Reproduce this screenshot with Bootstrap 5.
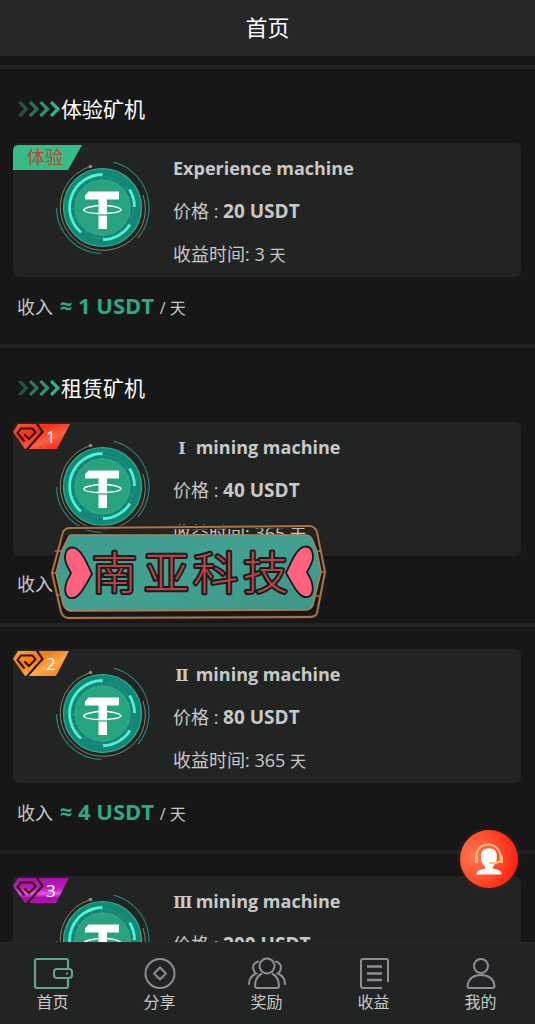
<!DOCTYPE html>
<html lang="zh-CN">
<head>
<meta charset="utf-8">
<meta name="viewport" content="width=device-width, initial-scale=1">
<title>首页</title>
<link href="https://cdn.jsdelivr.net/npm/bootstrap@5.3.0/dist/css/bootstrap.min.css" rel="stylesheet">
<style>
  body { background: #171717; color: #c8c8c8; font-family: "Open Sans", "Noto Sans CJK SC", sans-serif; font-size: 18px; }
  .app-head { background: #272727; height: 56px; }
  .app-head h1 { font-size: 22px; line-height: 54px; color: #fff; font-weight: 400; }
  .app-main { min-height: 0; scrollbar-width: none; padding-top: 9px; }
  .app-main::-webkit-scrollbar { display: none; }
  .machine { border-top: 4px solid #222322; }
  .machine-title { font-size: 21px; line-height: 32px; color: #fff; font-weight: 400; padding: 24px 18px 18px; }
  .machine-body { padding: 0 14px 0 13px; }
  .machine-plain { padding-top: 22px; }
  .machine-card { --bs-card-bg: #222423; --bs-card-border-width: 0; --bs-card-border-radius: 6px; --bs-card-color: #c8c8c8; height: 134px; }
  .coin-col { width: 160px; padding: 15px 0 0 40px; }
  .machine-info { padding-top: 4px; line-height: 43px; }
  .machine-info > * { height: 43px; }
  .machine-info h3 { font-size: 18px; line-height: 43px; font-weight: 700; }
  .machine-info strong { font-size: 19px; }
  .numeral { display: inline-block; width: 18px; text-align: center; font: 700 16px "DejaVu Serif", serif; }
  .unit { font-size: 16px; }
  .income { height: 67px; line-height: 28px; padding: 14px 4px 0; }
  .income strong { color: #2fa886; font-size: 22px; margin: 0 1px 0 2px; }
  .level { position: absolute; left: 0; top: 2px; line-height: 0; }
  .stamp { position: absolute; left: 37px; top: 101px; z-index: 3; line-height: 0; }
  .app-nav { background: #222423; height: 82px; border-top: 1px solid #292b2a; }
  .app-nav .nav-link { color: #c8c8c8; font-size: 16px; line-height: 22px; padding: 12px 2px 0 0; }
  .app-nav svg { height: 36px; width: 40px; fill: none; stroke: #8d8d98; stroke-width: 2; }
  .app-nav .active svg { stroke: #62a68d; }
  .service { position: absolute; right: 17px; bottom: 136px; width: 58px; height: 58px; background: radial-gradient(circle at 25% 45%, #ff7650 0, #ff5030 42%, #fc1c10 85%); box-shadow: 0 0 5px #7c241488; }
</style>
</head>
<body>
<svg width="0" height="0" class="position-absolute" aria-hidden="true">
  <defs>
    <radialGradient id="rim"><stop offset=".65" stop-color="#138170"/><stop offset="1" stop-color="#118a77"/></radialGradient>
    <linearGradient id="red" x2="1" y2="1"><stop stop-color="#ff5b36"/><stop offset=".35" stop-color="#f03018"/><stop offset=".62" stop-color="#ff6040"/><stop offset="1" stop-color="#e81206"/></linearGradient>
    <linearGradient id="orange" x2="1" y2="1"><stop stop-color="#ffa53e"/><stop offset=".35" stop-color="#f37c0a"/><stop offset=".62" stop-color="#ffa94e"/><stop offset="1" stop-color="#f07400"/></linearGradient>
    <linearGradient id="purple" x2="0" y2="1"><stop stop-color="#ab0fae"/><stop offset=".4" stop-color="#b51fb6"/><stop offset=".62" stop-color="#e058df"/><stop offset=".8" stop-color="#a90aaa"/><stop offset="1" stop-color="#b514b8"/></linearGradient>
    <symbol id="coin" viewBox="0 0 100 100">
      <g fill="none">
        <path d="M60.500 4.200A47 47 0 0 1 85 80" stroke="#267f7b" stroke-width="1.200"/>
        <path d="M3.500 50A46 46 0 0 0 48.500 95.500" stroke="#267f7b" stroke-width="1.200"/>
        <path d="M37.500 8.500A42.500 42.500 0 0 0 9.500 63A43 43 0 0 0 89 68A45 45 0 0 0 90 37" stroke="#8d7d58" stroke-width="1"/>
      </g>
      <circle cx="37.500" cy="8.500" r="1.800" fill="#998b65"/>
      <circle cx="49.500" cy="49.500" r="39" fill="url(#rim)" stroke="#32ad91" stroke-width="1.200"/>
      <circle cx="49.500" cy="49.500" r="29.500" fill="none" stroke="#26988a" stroke-width="4"/>
      <circle cx="49.500" cy="49.500" r="29.500" fill="none" stroke="#158375" stroke-width="3" stroke-dasharray="8.200 1"/>
      <circle cx="49.500" cy="49.500" r="27.500" fill="#27a37e" stroke="#3cb08f" stroke-width=".8"/>
      <g fill="none" stroke="#4ff2d1" stroke-width="2.800">
        <path d="M49.500 16.500A33 33 0 0 0 28 74.500"/>
        <path d="M76.500 31.500A32.500 32.500 0 0 1 81.500 49"/>
        <path d="M77 66.500A32.500 32.500 0 0 1 50 81.500"/>
      </g>
      <path fill="#fff" d="M35.500 33.500h30.500v8h-12v29.500h-8.500v-29.500h-13.500v-4z"/>
      <path d="M45.500 47.500C22 50.500 29 55.500 49.500 55.500S76 50 54 47.500" fill="none" stroke="#fff" stroke-width="1.400"/>
      <path d="M45.500 57h8.500" stroke="#27a37e" stroke-width="1.200"/>
    </symbol>
    <symbol id="arrows" viewBox="0 0 42 16">
      <g fill="none" stroke="#35b08c" stroke-width="3.200">
        <path opacity=".4" d="M1 1L8 8L1 15"/><path opacity=".6" d="M11.500 1L18.500 8L11.500 15"/><path opacity=".8" d="M22 1L29 8L22 15"/><path d="M32.500 1L39.500 8L32.500 15"/>
      </g>
    </symbol>
    <symbol id="gem" viewBox="0 0 32 25">
      <path d="M23.500 -1L29.500 8L13.500 26" fill="none" stroke="#35100f" stroke-width="2.200"/>
      <path d="M11.500 17.500L4.500 9L8 4.500H19.500L22.500 8.500L16 15L11.500 10.500" fill="none" stroke="#35100f" stroke-width="2"/>
    </symbol>
    <path id="heart" d="M27 27C20 39 15 50 8 51C1 52-1 45 1 37C2 32 5 29 6 26C3 21 0 16 0 11C0 3 4-1 10 1C17 4 22 16 27 27z"/>
  </defs>
</svg>

<div class="d-flex flex-column vh-100 position-relative overflow-hidden">
  <header class="app-head flex-shrink-0 text-center"><h1 class="m-0">首页</h1></header>

  <main class="app-main flex-grow-1 overflow-auto">
    <section class="machine">
      <h2 class="machine-title m-0 d-flex align-items-center"><svg width="43" height="16" aria-hidden="true"><use href="#arrows"/></svg>体验矿机</h2>
      <div class="machine-body">
        <div class="card machine-card flex-row">
          <div class="level"><svg width="69" height="25"><path d="M0 25V6Q0 0 6 0H69L55 25z" fill="#35bd87"/><text x="14" y="19" font-size="18" fill="#c5442c">体验</text></svg></div>
          <div class="coin-col flex-shrink-0"><svg width="100" height="100" role="img" aria-label="USDT"><use href="#coin"/></svg></div>
          <div class="machine-info"><h3 class="m-0">Experience machine</h3><div>价格 : <strong>20 USDT</strong></div><div>收益时间: 3 <span class="unit">天</span></div></div>
        </div>
        <div class="income">收入 <strong>≈ 1 USDT</strong> <span class="unit">/ 天</span></div>
      </div>
    </section>

    <section class="machine">
      <h2 class="machine-title m-0 d-flex align-items-center"><svg width="43" height="16" aria-hidden="true"><use href="#arrows"/></svg>租赁矿机</h2>
      <div class="machine-body">
        <div class="card machine-card flex-row">
          <div class="level"><svg width="57" height="25"><path d="M0 8L5 0H57L44 25H12z" fill="url(#red)"/><use href="#gem" width="32" height="25"/><text x="33" y="19" font-size="17" fill="#fff">1</text></svg></div>
          <div class="coin-col flex-shrink-0"><svg width="100" height="100" role="img" aria-label="USDT"><use href="#coin"/></svg></div>
          <div class="machine-info"><h3 class="m-0"><span class="numeral">Ⅰ</span> mining machine</h3><div>价格 : <strong>40 USDT</strong></div><div>收益时间: 365 <span class="unit">天</span></div></div>
          <div class="stamp">
            <svg width="278" height="98" viewBox="0 0 278 98">
              <defs><linearGradient id="teal" x2="1" y2="1"><stop stop-color="#3d9b8f"/><stop offset=".5" stop-color="#43a091"/><stop offset="1" stop-color="#3c9685"/></linearGradient></defs>
              <path d="M17 11L10 26L5 50L10 76L16 94H262L275 49L266 14V86H20z" fill="#1b1515"/>
              <path d="M19 13Q20 12 23 12H255Q260 12 262 16L267 28L271 49L263 82Q261 87 255 87L20 88Q15 87 13 81L6 50L12 27z" fill="url(#teal)" stroke="#b28155" stroke-width="1.500"/>
              <path d="M13 9Q15 5 20 5L259 3Q265 3 267 9L275 49L267 90Q266 94 259 94L19 95Q13 95 11 89L2 50z" fill="none" stroke="#2a1d18" stroke-width="4"/>
              <path d="M13 9Q15 5 20 5L259 3Q265 3 267 9L275 49L267 90Q266 94 259 94L19 95Q13 95 11 89L2 50z" fill="none" stroke="#a4744c" stroke-width="2"/>
              <path d="M5 28H12M2 50H7M6 72H12M266 28H272M270 49H275M265 73H270" stroke="#a4744c" stroke-width="1.500"/>
              <g fill="#ff627f" stroke="#17171b" stroke-width="1.800"><use href="#heart" x="15" y="24"/><use href="#heart" transform="translate(263 23) scale(-1 1)"/></g>
              <g font-size="45" font-weight="300" stroke="#1b1b1d" stroke-width="4" stroke-linejoin="round" paint-order="stroke" fill="#b94343" font-family="'Noto Sans CJK SC', sans-serif">
                <text x="42" y="67">南</text><text x="94" y="67">亚</text><text x="143" y="67">科</text><text x="193" y="67">技</text>
              </g>
            </svg>
          </div>
        </div>
        <div class="income">收入</div>
      </div>
    </section>

    <section class="machine">
      <div class="machine-body machine-plain">
        <div class="card machine-card flex-row">
          <div class="level"><svg width="57" height="25"><path d="M0 8L5 0H56L43 25H12z" fill="url(#orange)"/><use href="#gem" width="32" height="25"/><text x="33" y="19" font-size="17" fill="#fff">2</text></svg></div>
          <div class="coin-col flex-shrink-0"><svg width="100" height="100" role="img" aria-label="USDT"><use href="#coin"/></svg></div>
          <div class="machine-info"><h3 class="m-0"><span class="numeral">Ⅱ</span> mining machine</h3><div>价格 : <strong>80 USDT</strong></div><div>收益时间: 365 <span class="unit">天</span></div></div>
        </div>
        <div class="income">收入 <strong>≈ 4 USDT</strong> <span class="unit">/ 天</span></div>
      </div>
    </section>

    <section class="machine">
      <div class="machine-body machine-plain">
        <div class="card machine-card flex-row">
          <div class="level"><svg width="57" height="25"><path d="M0 8L5 0H56L43 25H12z" fill="url(#purple)"/><use href="#gem" width="32" height="25"/><text x="33" y="19" font-size="17" fill="#fff">3</text></svg></div>
          <div class="coin-col flex-shrink-0"><svg width="100" height="100" role="img" aria-label="USDT"><use href="#coin"/></svg></div>
          <div class="machine-info"><h3 class="m-0"><span class="numeral">Ⅲ</span> mining machine</h3><div>价格 : <strong>200 USDT</strong></div></div>
        </div>
      </div>
    </section>
  </main>

  <button type="button" class="service btn rounded-circle border-0 p-0" aria-label="客服">
    <svg class="d-block" width="58" height="58" viewBox="0 0 60 60"><path fill="#fff" d="M30 19c-6 0-9 4-8 10 0 5 2 7 4 9v2c-6 1-9 2-9 6h26c0-4-3-5-9-6v-2c2-2 4-4 4-9 1-6-2-10-8-10z"/><g fill="none" stroke="#ffc27b" stroke-width="2.200" stroke-linecap="round"><path d="M17 30C15 10 43 10 42 30"/><path stroke-width="3" d="M17 28v5M43 28v5"/><path d="M42 32Q38 35 31 34"/></g></svg>
  </button>

  <nav class="app-nav nav nav-justified flex-nowrap flex-shrink-0" aria-label="主导航">
    <a class="nav-link active" href="#" aria-current="page"><svg class="d-block mx-auto" viewBox="0 0 40 36"><path stroke-width="2.200" d="M35 14V6Q35 4 33 4H4Q2 4 2 6V31Q2 33 4 33H33Q35 33 35 31V23"/><rect x="21" y="14" width="18" height="9" rx="3"/><path d="M34 17.500v2"/></svg>首页</a>
    <a class="nav-link" href="#"><svg class="d-block mx-auto" viewBox="0 0 40 36"><circle cx="20" cy="18.500" r="14.500"/><path stroke-linejoin="round" d="M20 12.500L26 18.500L20 24.500L14 18.500z"/></svg>分享</a>
    <a class="nav-link" href="#"><svg class="d-block mx-auto" viewBox="0 0 40 36"><circle cx="20" cy="11" r="7.500"/><path d="M15 18.500Q8 22 8 31Q8 33 10 33H30Q32 33 32 31Q32 22 25 18.500"/><path d="M11 6.500Q4 9 7 16Q8 18 9 18.500Q2 22 2 29M29 6.500Q36 9 33 16Q32 18 31 18.500Q38 22 38 29" stroke-linecap="round"/></svg>奖励</a>
    <a class="nav-link" href="#"><svg class="d-block mx-auto" viewBox="0 0 40 36"><path d="M34 27V6Q34 4 32 4H9Q7 4 7 6V31Q7 33 9 33H28"/><path stroke-width="2.600" d="M13 11.500H28M13 18.500H28M13 25H28"/></svg>收益</a>
    <a class="nav-link" href="#"><svg class="d-block mx-auto" viewBox="0 0 40 36"><circle cx="20" cy="11" r="7"/><path d="M6.500 31Q8 20 20 20T33.500 31Q33.500 33 31.500 33H8.500Q6.500 33 6.500 31z"/></svg>我的</a>
  </nav>
</div>
<script src="https://cdn.jsdelivr.net/npm/bootstrap@5.3.0/dist/js/bootstrap.bundle.min.js"></script>
</body>
</html>
